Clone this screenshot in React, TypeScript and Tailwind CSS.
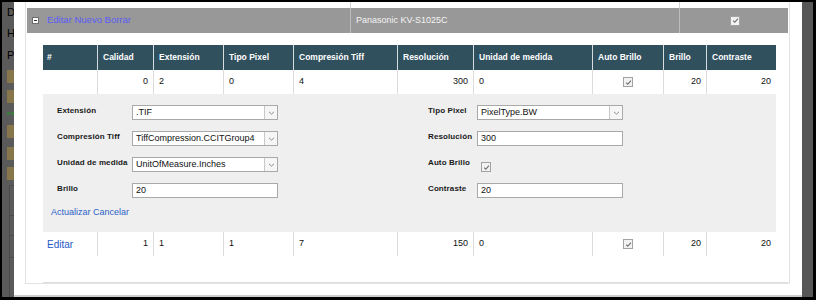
const cols = "grid grid-cols-[54px_56px_70px_70px_104px_76px_119px_71px_43px_70px]";

const headers = [
  "#",
  "Calidad",
  "Extensión",
  "Tipo Pixel",
  "Compresión Tiff",
  "Resolución",
  "Unidad de medida",
  "Auto Brillo",
  "Brillo",
  "Contraste",
];

type Cell = { v?: string; right?: boolean; check?: boolean; link?: boolean };

const rowOne: Cell[] = [
  {},
  { v: "0", right: true },
  { v: "2" },
  { v: "0" },
  { v: "4" },
  { v: "300", right: true },
  { v: "0" },
  { check: true },
  { v: "20", right: true },
  { v: "20", right: true },
];

const rowTwo: Cell[] = [
  { v: "Editar", link: true },
  { v: "1", right: true },
  { v: "1" },
  { v: "1" },
  { v: "7" },
  { v: "150", right: true },
  { v: "0" },
  { check: true },
  { v: "20", right: true },
  { v: "20", right: true },
];

function Check() {
  return (
    <span className="inline-flex h-[10px] w-[10px] items-center justify-center border border-[#a2a2a2] bg-[#f2f2f2]">
      <svg viewBox="0 0 8 8" className="h-[7px] w-[7px]">
        <path d="M1.3 4.1 L3.2 5.9 L6.8 1.9" fill="none" stroke="#6f6f6f" strokeWidth="1.2" />
      </svg>
    </span>
  );
}

function DataRow({ cells }: { cells: Cell[] }) {
  return (
    <div className={`${cols} h-[24px] text-[9px] text-[#111]`}>
      {cells.map((c, i) => (
        <div
          key={i}
          className={`flex items-center ${i === 0 ? "px-[4px]" : "border-l border-[#dcdcdc] px-[5px]"} ${
            c.right ? "justify-end" : ""
          } ${c.check ? "justify-center" : ""}`}
        >
          {c.check ? <Check /> : c.link ? <span className="text-[10px] text-[#2358c8]">{c.v}</span> : c.v}
        </div>
      ))}
    </div>
  );
}

function Select({ value }: { value: string }) {
  return (
    <div className="flex h-[15px] w-[146px] border border-[#a9a9a9] bg-white">
      <div className="flex flex-1 items-center pl-[3px] text-[9px] text-[#111]">{value}</div>
      <div className="flex w-[13px] items-center justify-center border-l border-[#c8c8c8] bg-[#f6f6f6]">
        <svg viewBox="0 0 7 4" className="h-[4px] w-[7px]">
          <path d="M1 0.8 L3.5 3.2 L6 0.8" fill="none" stroke="#8a8a8a" strokeWidth="1" />
        </svg>
      </div>
    </div>
  );
}

function Input({ value }: { value: string }) {
  return (
    <div className="flex h-[15px] w-[146px] items-center border border-[#a9a9a9] bg-white pl-[3px] text-[9px] text-[#111]">
      {value}
    </div>
  );
}

function Label({ text }: { text: string }) {
  return <div className="text-[8px] font-bold leading-[12px] tracking-[0.1px] text-[#1a1a1a]">{text}</div>;
}

function Folder() {
  return <div className="ml-[5px] h-[13px] w-[9px] bg-[#86764a]" />;
}

export default function App() {
  return (
    <div className="h-[300px] w-[816px] border-b-[3px] border-l-2 border-r-[3px] border-t-2 border-black font-['Liberation_Sans',Arial,sans-serif]">
      <div className="flex h-full">
        {/* page behind the dialog */}
        <div className="flex w-[12px] flex-col overflow-hidden whitespace-nowrap bg-[#5a5a5a] text-[11px] leading-none text-black">
          <div className="pl-[5px] pt-[5px]">De</div>
          <div className="mt-[10px] pl-[5px]">Ho</div>
          <div className="mt-[11px] pl-[5px]">Pr</div>
          <div className="mt-[9px]"><Folder /></div>
          <div className="mt-[7px]"><Folder /></div>
          <div className="ml-[5px] mt-[9px] flex gap-px">
            <div className="h-[3px] w-[3px] bg-[#3e7a3e]" />
            <div className="h-[3px] w-[3px] bg-[#3e7a3e]" />
          </div>
          <div className="mt-[10px]"><Folder /></div>
          <div className="mt-[9px]"><Folder /></div>
          <div className="mt-[7px]"><Folder /></div>
          <div className="ml-[7px] mt-[5px] flex-1 border-l border-t border-[#4a4a4a]">
            <div className="h-[30px] border-b border-[#4a4a4a]" />
            <div className="h-[20px] border-b border-[#4a4a4a]" />
            <div className="h-[22px] border-b border-[#4a4a4a]" />
          </div>
        </div>

        {/* dialog */}
        <div className="flex-1 border-b-2 border-[#cdcdcd] bg-white pl-[11px] pr-[12px]">
          <div className="border-b border-l border-r border-[#e2e2e2] px-px">
            <div className="flex h-[6px]">
              <div className="w-[323px]" />
              <div className="w-[329px] border-l border-[#d2d2d2]" />
              <div className="flex-1 border-l border-[#d2d2d2]" />
            </div>
            <div className="flex h-[25px] bg-[#989898]">
              <div className="flex w-[323px] items-center pl-[5px]">
                <span className="flex h-[7px] w-[7px] items-center justify-center border border-[#6e6e6e] bg-white">
                  <span className="h-px w-[3px] bg-[#333]" />
                </span>
                <span className="ml-[8px] text-[9.5px] text-[#5c5cf6]">Editar Nuevo Borrar</span>
              </div>
              <div className="flex w-[329px] items-center border-l border-[#bcbcbc] pl-[5px] text-[9px] text-[#f4f4f4]">
                Panasonic KV-S1025C
              </div>
              <div className="flex flex-1 items-center justify-center border-l border-[#bcbcbc] pl-[2px]">
                <Check />
              </div>
            </div>

            <div className="ml-[16px] mt-[12px] border-b border-[#dedede] pb-[26px]">
              <div className="w-[733px]">
                <div className={`${cols} h-[25px] bg-[#30505e] text-[8.5px] font-bold text-white`}>
                  {headers.map((h, i) => (
                    <div
                      key={h}
                      className={`flex items-center ${i === 0 ? "px-[4px]" : "border-l border-[#d5dcdf] px-[5px]"}`}
                    >
                      {h}
                    </div>
                  ))}
                </div>
                <DataRow cells={rowOne} />

                <div className="h-[138px] bg-[#efefef] pt-[11px]">
                  <div className="ml-[14px] grid grid-cols-[75px_146px_150px_49px_146px] grid-rows-[15px_15px_15px_15px] items-start gap-y-[11px]">
                    <Label text="Extensión" />
                    <Select value=".TIF" />
                    <div />
                    <Label text="Tipo Pixel" />
                    <Select value="PixelType.BW" />

                    <Label text="Compresión Tiff" />
                    <Select value="TiffCompression.CCITGroup4" />
                    <div />
                    <Label text="Resolución" />
                    <Input value="300" />

                    <Label text="Unidad de medida" />
                    <Select value="UnitOfMeasure.Inches" />
                    <div />
                    <Label text="Auto Brillo" />
                    <div className="ml-[4px] mt-[5px] flex">
                      <Check />
                    </div>

                    <Label text="Brillo" />
                    <Input value="20" />
                    <div />
                    <Label text="Contraste" />
                    <Input value="20" />
                  </div>
                  <div className="ml-[8px] mt-[9px] text-[9px] leading-[11px] text-[#2d5fc6]">Actualizar Cancelar</div>
                </div>

                <DataRow cells={rowTwo} />
              </div>
            </div>
          </div>
        </div>

        <div className="w-[11px] bg-[#575757]" />
      </div>
    </div>
  );
}
